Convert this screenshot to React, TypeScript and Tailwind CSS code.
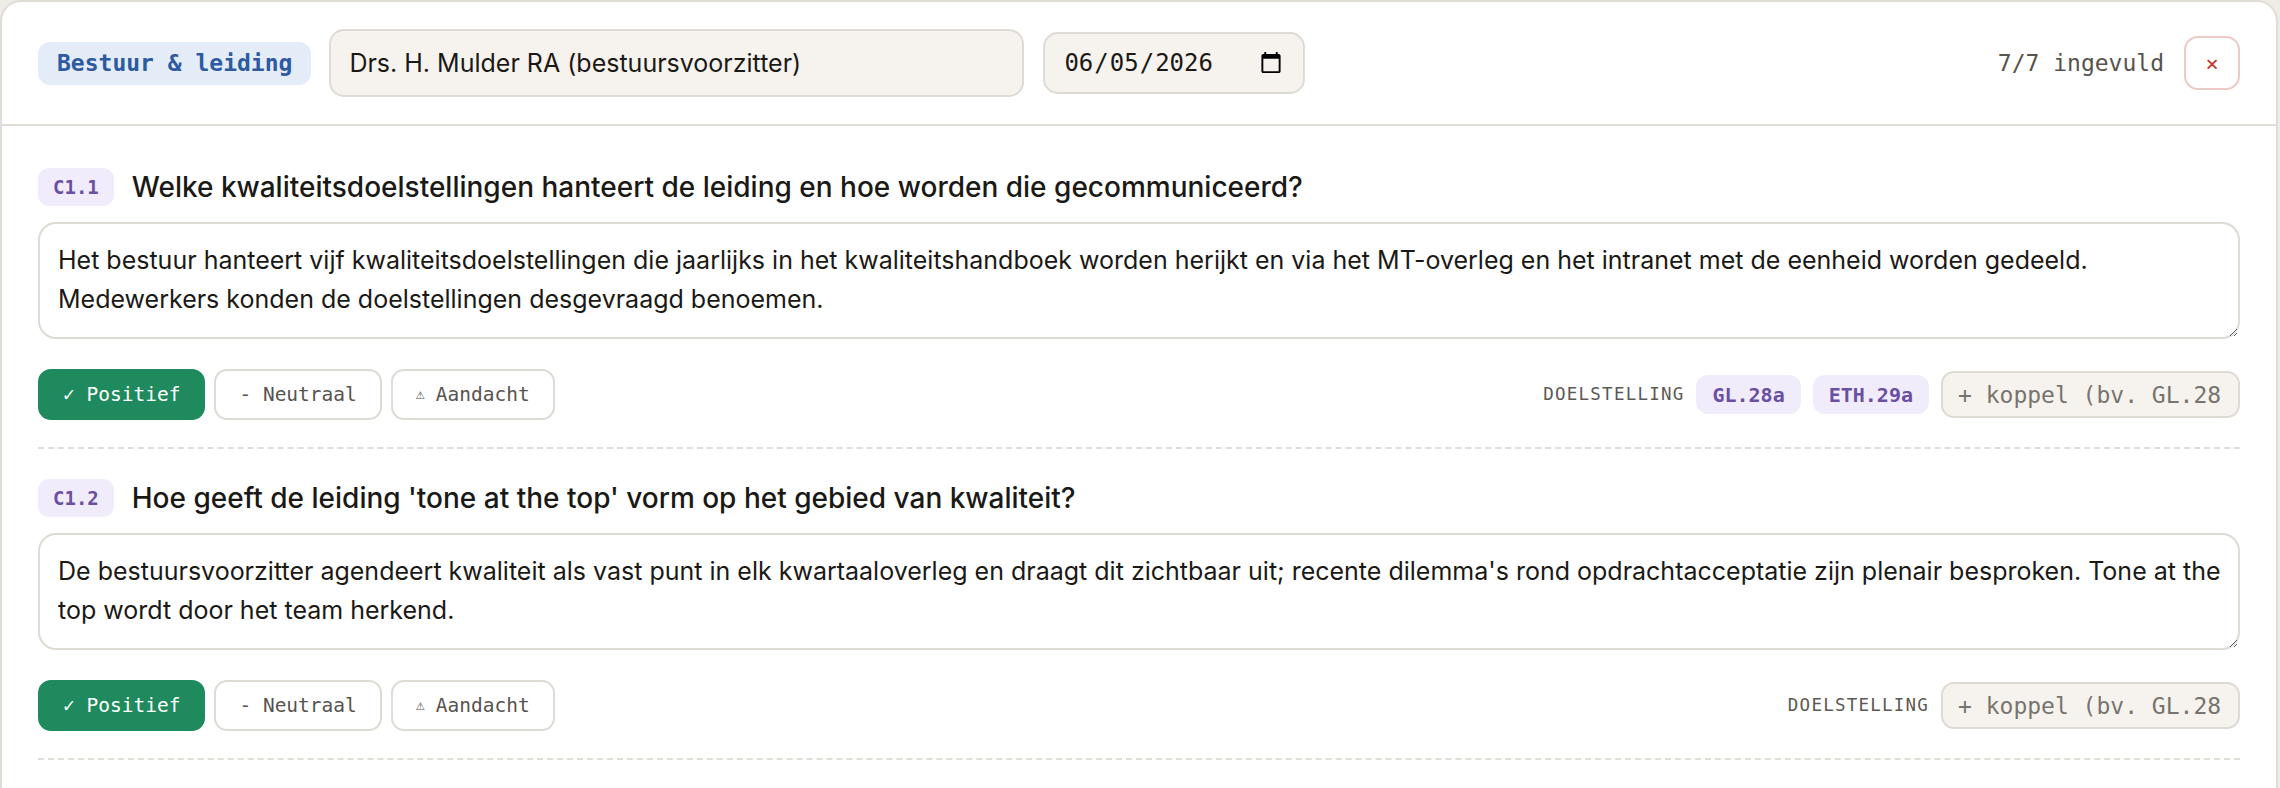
import React from "react";

type Section = {
  code: string;
  title: string;
  answer: string;
  tags: string[];
};

const sections: Section[] = [
  {
    code: "C1.1",
    title: "Welke kwaliteitsdoelstellingen hanteert de leiding en hoe worden die gecommuniceerd?",
    answer:
      "Het bestuur hanteert vijf kwaliteitsdoelstellingen die jaarlijks in het kwaliteitshandboek worden herijkt en via het MT-overleg en het intranet met de eenheid worden gedeeld.\nMedewerkers konden de doelstellingen desgevraagd benoemen.",
    tags: ["GL.28a", "ETH.29a"],
  },
  {
    code: "C1.2",
    title: "Hoe geeft de leiding 'tone at the top' vorm op het gebied van kwaliteit?",
    answer:
      "De bestuursvoorzitter agendeert kwaliteit als vast punt in elk kwartaaloverleg en draagt dit zichtbaar uit; recente dilemma's rond opdrachtacceptatie zijn plenair besproken. Tone at the\ntop wordt door het team herkend.",
    tags: [],
  },
];

function QuestionBlock({ s }: { s: Section }) {
  return (
    <div className="border-b-2 border-dashed border-[#e1ddd7] pt-[30px] pb-[27px]">
      <div className="flex h-[38px] items-center gap-[18px]">
        <span className="flex h-[38px] items-center rounded-[11px] bg-[#f1ecfb] px-[15px] font-['DejaVu_Sans_Mono',monospace] text-[19px] font-semibold text-[#6a4fa3]">
          {s.code}
        </span>
        <h3 className="font-[Inter,sans-serif] text-[28px] font-medium leading-[38px] text-[#1b1916]">
          {s.title}
        </h3>
      </div>
      <textarea
        className="mt-[16px] block h-[117px] w-full rounded-[18px] border-2 border-[#dedad4] bg-white py-[17px] pr-[6px] pl-[18px] font-[Inter,sans-serif] text-[25px] leading-[39px] text-[#1b1916] outline-none"
        defaultValue={s.answer}
      />
      <div className="mt-[30px] flex h-[51px] items-center justify-between">
        <div className="flex items-center gap-[9px]">
          <button className="flex h-[51px] items-center rounded-[13px] border-2 border-[#1f8a5d] bg-[#1f8a5d] px-[23px] font-['DejaVu_Sans_Mono',monospace] text-[19.5px] text-white">
            ✓ Positief
          </button>
          <button className="flex h-[51px] items-center rounded-[13px] border-2 border-[#dedad4] bg-white px-[23px] font-['DejaVu_Sans_Mono',monospace] text-[19.5px] text-[#57534e]">
            - Neutraal
          </button>
          <button className="flex h-[51px] items-center rounded-[13px] border-2 border-[#dedad4] bg-white px-[23px] font-['DejaVu_Sans_Mono',monospace] text-[19.5px] text-[#57534e]">
            <span className="mr-[11px] text-[15px]">⚠</span>Aandacht
          </button>
        </div>
        <div className="flex items-center gap-[12px]">
          <span className="font-['DejaVu_Sans_Mono',monospace] text-[17.5px] tracking-[0.07em] text-[#5c5955]">
            DOELSTELLING
          </span>
          {s.tags.map((t) => (
            <span
              key={t}
              className="flex h-[39px] items-center rounded-[12px] bg-[#f1ecfb] px-[16px] font-['DejaVu_Sans_Mono',monospace] text-[20px] font-bold text-[#6a4fa3]"
            >
              {t}
            </span>
          ))}
          <input
            className="h-[47px] w-[299px] rounded-[13px] border-2 border-[#dedad4] bg-[#f6f3ef] pr-[17px] pl-[15px] font-['DejaVu_Sans_Mono',monospace] text-[23px] text-[#6b6863] outline-none placeholder:text-[#77736e]"
            placeholder="+ koppel (bv. GL.28a)"
          />
        </div>
      </div>
    </div>
  );
}

export default function App() {
  return (
    <div className="min-h-screen bg-[#efebe6] pr-[2px]">
      <div className="min-h-[800px] rounded-t-[21px] border-2 border-b-0 border-[#e0dcd6] bg-white">
        <div className="flex items-center border-b-2 border-[#e0dcd6] px-[36px] py-[27px]">
          <span className="flex h-[43px] items-center rounded-[12px] bg-[#e4ecf7] px-[19px] font-['DejaVu_Sans_Mono',monospace] text-[23px] font-bold text-[#2d5aa0]">
            Bestuur &amp; leiding
          </span>
          <input
            className="ml-[18px] h-[68px] w-[695px] rounded-[15px] border-2 border-[#dedad4] bg-[#f6f3ef] px-[18px] font-[Inter,sans-serif] text-[25px] text-[#1b1916] outline-none"
            defaultValue="Drs. H. Mulder RA (bestuursvoorzitter)"
          />
          <input
            type="date"
            className="ml-[19px] h-[62px] w-[262px] rounded-[15px] border-2 border-[#dedad4] bg-[#f6f3ef] px-[18px] font-['DejaVu_Sans_Mono',monospace] text-[24px] text-[#1b1916] outline-none"
            defaultValue="2026-06-05"
          />
          <div className="flex-1" />
          <span className="font-['DejaVu_Sans_Mono',monospace] text-[23px] text-[#57534e]">
            7/7 ingevuld
          </span>
          <button className="ml-[20px] flex h-[54px] w-[56px] items-center justify-center rounded-[14px] border-2 border-[#eccac5] bg-white font-['DejaVu_Sans_Mono',monospace] text-[22px] text-[#c0392b]">
            ×
          </button>
        </div>
        <div className="px-[36px] pt-[12px]">
          {sections.map((s) => (
            <QuestionBlock key={s.code} s={s} />
          ))}
        </div>
      </div>
    </div>
  );
}
